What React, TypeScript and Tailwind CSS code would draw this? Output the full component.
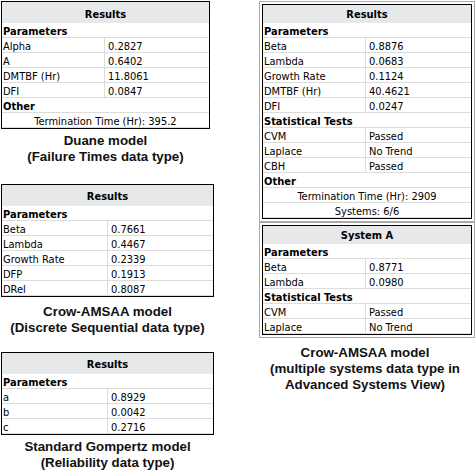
import React from "react";

type Row =
  | { t: "s"; label: string }
  | { t: "kv"; k: string; v: string }
  | { t: "c"; text: string };

function Table({
  title,
  rows,
  labelW,
  headerCls,
  widthCls,
}: {
  title: string;
  rows: Row[];
  labelW: string;
  headerCls: string;
  widthCls: string;
}) {
  return (
    <div className={`${widthCls} border border-black bg-white text-[11px] text-black font-['DejaVu_Sans_Condensed','DejaVu_Sans','Liberation_Sans',sans-serif]`}>
      <div className={`${headerCls} bg-[#e6e8ea] flex items-center justify-center font-bold leading-none`}>{title}</div>
      {rows.map((r, i) => {
        if (r.t === "s")
          return (
            <div key={i} className="h-[15px] border-b border-[#dcdcdc] flex items-center pl-[1px] pt-[2px] font-bold leading-none">
              {r.label}
            </div>
          );
        if (r.t === "c")
          return (
            <div key={i} className="h-[15px] border-b border-[#dcdcdc] flex items-center justify-center pt-[2px] leading-none">
              {r.text}
            </div>
          );
        return (
          <div key={i} className="h-[15px] border-b border-[#dcdcdc] flex leading-none">
            <div className={`${labelW} shrink-0 border-r border-[#dcdcdc] flex items-center pl-[1px] pt-[2px]`}>{r.k}</div>
            <div className="flex-1 flex items-center pl-[3px] pt-[2px]">{r.v}</div>
          </div>
        );
      })}
    </div>
  );
}

function Caption({ lines, cls }: { lines: string[]; cls: string }) {
  return (
    <div className={`${cls} text-center font-bold text-[13.3px] leading-[16px] text-[#111] font-['Liberation_Sans',Arial,sans-serif]`}>
      {lines.map((l, i) => (
        <div key={i}>{l}</div>
      ))}
    </div>
  );
}

export default function App() {
  return (
    <div className="w-[475px] h-[473px] bg-white flex overflow-hidden">
      <div className="w-[258px] shrink-0 flex flex-col pl-[1px] pt-[1px]">
        <Table
          title="Results"
          widthCls="w-[209px]"
          headerCls="h-[21px] pt-[3px]"
          labelW="w-[103px]"
          rows={[
            { t: "s", label: "Parameters" },
            { t: "kv", k: "Alpha", v: "0.2827" },
            { t: "kv", k: "A", v: "0.6402" },
            { t: "kv", k: "DMTBF (Hr)", v: "11.8061" },
            { t: "kv", k: "DFI", v: "0.0847" },
            { t: "s", label: "Other" },
            { t: "c", text: "Termination Time (Hr): 395.2" },
          ]}
        />
        <Caption cls="w-[209px] mt-[4px]" lines={["Duane model", "(Failure Times data type)"]} />
        <div className="mt-[19px]">
          <Table
            title="Results"
            widthCls="w-[213px]"
            headerCls="h-[21px] pt-[2px]"
            labelW="w-[106px]"
            rows={[
              { t: "s", label: "Parameters" },
              { t: "kv", k: "Beta", v: "0.7661" },
              { t: "kv", k: "Lambda", v: "0.4467" },
              { t: "kv", k: "Growth Rate", v: "0.2339" },
              { t: "kv", k: "DFP", v: "0.1913" },
              { t: "kv", k: "DRel", v: "0.8087" },
            ]}
          />
        </div>
        <Caption cls="w-[213px] mt-[7px]" lines={["Crow-AMSAA model", "(Discrete Sequential data type)"]} />
        <div className="mt-[16px]">
          <Table
            title="Results"
            widthCls="w-[213px]"
            headerCls="h-[21px] pt-[2px]"
            labelW="w-[106px]"
            rows={[
              { t: "s", label: "Parameters" },
              { t: "kv", k: "a", v: "0.8929" },
              { t: "kv", k: "b", v: "0.0042" },
              { t: "kv", k: "c", v: "0.2716" },
            ]}
          />
        </div>
        <Caption cls="w-[213px] mt-[4px]" lines={["Standard Gompertz model", "(Reliability data type)"]} />
      </div>
      <div className="flex flex-col pt-[1px] ml-[1px]">
        <div className="w-[216px] border border-[#a9a9a9] p-[2px]">
          <Table
            title="Results"
            widthCls="w-[210px]"
            headerCls="h-[18px] pt-[1px]"
            labelW="w-[103px]"
            rows={[
              { t: "s", label: "Parameters" },
              { t: "kv", k: "Beta", v: "0.8876" },
              { t: "kv", k: "Lambda", v: "0.0683" },
              { t: "kv", k: "Growth Rate", v: "0.1124" },
              { t: "kv", k: "DMTBF (Hr)", v: "40.4621" },
              { t: "kv", k: "DFI", v: "0.0247" },
              { t: "s", label: "Statistical Tests" },
              { t: "kv", k: "CVM", v: "Passed" },
              { t: "kv", k: "Laplace", v: "No Trend" },
              { t: "kv", k: "CBH", v: "Passed" },
              { t: "s", label: "Other" },
              { t: "c", text: "Termination Time (Hr): 2909" },
              { t: "c", text: "Systems: 6/6" },
            ]}
          />
        </div>
        <div className="w-[216px] border border-[#a9a9a9] p-[2px]">
          <Table
            title="System A"
            widthCls="w-[210px]"
            headerCls="h-[18px] pt-[1px]"
            labelW="w-[103px]"
            rows={[
              { t: "s", label: "Parameters" },
              { t: "kv", k: "Beta", v: "0.8771" },
              { t: "kv", k: "Lambda", v: "0.0980" },
              { t: "s", label: "Statistical Tests" },
              { t: "kv", k: "CVM", v: "Passed" },
              { t: "kv", k: "Laplace", v: "No Trend" },
            ]}
          />
        </div>
        <Caption
          cls="w-[216px] pr-[4px] mt-[7px]"
          lines={["Crow-AMSAA model", "(multiple systems data type in", "Advanced Systems View)"]}
        />
      </div>
    </div>
  );
}
